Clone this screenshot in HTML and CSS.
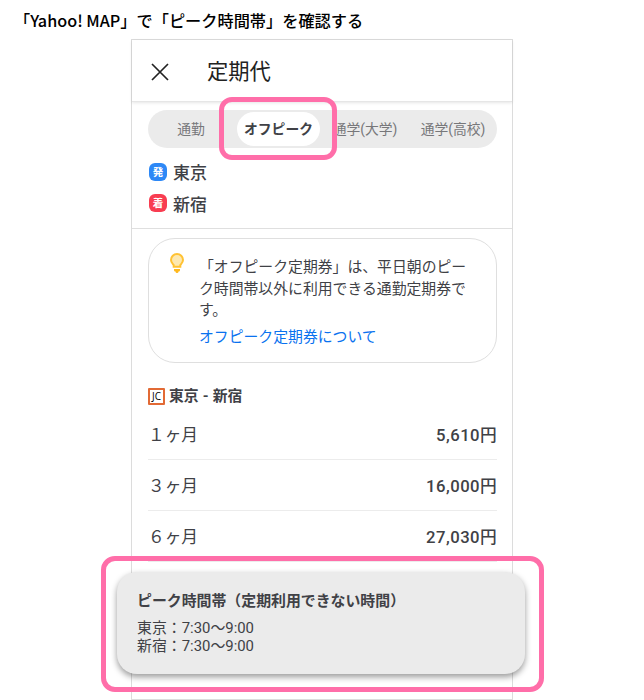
FILE: index.html
```html
<!DOCTYPE html>
<html lang="ja">

<head>
    <meta charset="UTF-8">
    <meta name="viewport" content="width=device-width, initial-scale=1.0">
    <title>定期代</title>
    <link rel="stylesheet" href="styles.css">
</head>

<body>
    <h1 class="page-title">「Yahoo! MAP」で「ピーク時間帯」を確認する</h1>

    <div class="phone">
        <header class="header">
            <svg class="close" viewBox="0 0 18 18">
                <path d="M1 1l16 16M17 1L1 17"></path>
            </svg>
            <h2 class="header-title">定期代</h2>
        </header>

        <!-- 定期の種類 -->
        <div class="tabs">
            <span class="tab">通勤</span>
            <span class="tab active">オフピーク</span>
            <span class="tab">通学(大学)</span>
            <span class="tab">通学(高校)</span>
            <div class="tab-highlight"></div>
        </div>

        <!-- 発着駅 -->
        <div class="stations">
            <div class="station"><span class="badge from">発</span>東京</div>
            <div class="station"><span class="badge to">着</span>新宿</div>
        </div>

        <div class="info">
            <svg class="bulb" viewBox="0 0 16 22">
                <path class="glass" d="M8 2a6 6 0 0 0-6 6c0 2.500 1.600 3.700 2.700 5v1.800h6.600V13c1.100-1.300 2.700-2.500 2.700-5a6 6 0 0 0-6-6z"></path>
                <path class="base" d="M5 17h6v1.200a1.300 1.300 0 0 1-1.300 1.300H9.500a1.500 1.500 0 0 1-3 0h-.2A1.300 1.300 0 0 1 5 18.200z"></path>
            </svg>
            <div class="info-text">
                <p>「オフピーク定期券」は、平日朝のピーク時間帯以外に利用できる通勤定期券です。</p>
                <a class="info-link">オフピーク定期券について</a>
            </div>
        </div>

        <!-- 料金 -->
        <div class="route"><span class="line-mark">JC</span>東京 - 新宿</div>
        <ul class="fares">
            <li><span>１ヶ月</span><b>5,610円</b></li>
            <li><span>３ヶ月</span><b>16,000円</b></li>
            <li><span>６ヶ月</span><b>27,030円</b></li>
        </ul>

        <!-- ピーク時間帯 -->
        <div class="peak-frame">
            <div class="peak">
                <h3>ピーク時間帯（定期利用できない時間）</h3>
                <p>東京：7:30〜9:00</p>
                <p>新宿：7:30〜9:00</p>
            </div>
        </div>
    </div>
</body>

</html>
```
FILE: styles.css
```css
* {
    box-sizing: border-box;
    margin: 0;
    padding: 0;
}

body {
    height: 700px;
    overflow: hidden;
    background: #fff;
    color: #404146;
    font-family: Roboto, "Noto Sans CJK JP", sans-serif;
}

.page-title {
    height: 39px;
    padding: 8px 0 0 14px;
    font-family: "Noto Sans CJK JP", sans-serif;
    font-size: 16.2px;
    font-weight: 500;
    line-height: 24px;
    color: #000;
    white-space: nowrap;
}

.phone {
    position: relative;
    width: 382px;
    height: 661px;
    margin-left: 131px;
    border: 1px solid #dcdcdc;
}

/* ヘッダー */
.header {
    display: flex;
    align-items: center;
    height: 62px;
    padding-left: 19px;
    border-bottom: 1px solid #e6e6e6;
    box-shadow: 0 1px 3px rgba(0, 0, 0, 0.1);
}

.close {
    width: 18px;
    height: 18px;
    margin-top: 2px;
    fill: none;
    stroke: #222;
    stroke-width: 1.7;
}

.header-title {
    margin: 2px 0 0 38px;
    font-size: 21.3px;
    font-weight: 400;
    line-height: 30px;
    color: #222;
}

/* タブ */
.tabs {
    position: relative;
    display: grid;
    grid-template-columns: 86px 87px 88px 88px;
    align-items: center;
    width: 349px;
    height: 38px;
    margin: 8px 0 0 16px;
    border-radius: 19px;
    background: #ebebeb;
}

.tab {
    font-size: 13.8px;
    line-height: 34px;
    text-align: center;
    color: #77777a;
    white-space: nowrap;
}

.tab.active {
    width: 83px;
    height: 34px;
    margin-left: 3px;
    border-radius: 17px;
    background: #fff;
    font-weight: 700;
    color: #404146;
}

.tab-highlight {
    position: absolute;
    top: -13px;
    left: 71px;
    width: 118px;
    height: 63px;
    border: 5px solid #ff6ea9;
    border-radius: 13px;
}

/* 発着駅 */
.stations {
    height: 81px;
    padding: 8px 0 0 17px;
    border-bottom: 1px solid #dfdfdf;
}

.station {
    display: flex;
    align-items: center;
    gap: 6px;
    height: 31.5px;
    font-size: 17px;
    font-weight: 500;
}

.badge {
    width: 18px;
    height: 18px;
    border-radius: 6px;
    font-size: 10.5px;
    font-weight: 700;
    line-height: 19px;
    text-align: center;
    color: #fff;
}

.from {
    background: #2d88f6;
}

.to {
    background: #f83d51;
}

/* お知らせ */
.info {
    display: flex;
    width: 349px;
    height: 125px;
    margin: 9px 0 0 16px;
    padding: 13px 0 0 20px;
    border: 1px solid #dfdfdf;
    border-radius: 27px;
}

.bulb {
    width: 16px;
    height: 22px;
}

.glass {
    fill: #fde8b0;
    stroke: #ffc233;
    stroke-width: 2;
}

.base {
    fill: #ffb81c;
}

.info-text {
    width: 270px;
    margin: 5px 0 0 14px;
    font-size: 14.85px;
    line-height: 21.7px;
}

.info-link {
    display: block;
    margin-top: 5px;
    color: #0a72ef;
}

/* 路線と料金 */
.route {
    display: flex;
    align-items: center;
    gap: 4px;
    height: 22px;
    margin: 22px 0 0 16px;
    font-size: 14.8px;
    font-weight: 700;
    line-height: 20px;
    word-spacing: 0.5px;
}

.line-mark {
    width: 17px;
    height: 17px;
    border: 2px solid #e26a35;
    border-radius: 1px;
    font-family: "Open Sans", sans-serif;
    font-size: 10px;
    font-weight: 400;
    line-height: 13px;
    text-align: center;
    color: #000;
}

.fares {
    margin: 2px 15px 0 16px;
    list-style: none;
}

.fares li {
    display: flex;
    justify-content: space-between;
    align-items: center;
    height: 51px;
    border-bottom: 1px solid #ececec;
    font-size: 16.7px;
}

.fares b {
    margin-right: -0.3px;
    font-weight: 500;
    letter-spacing: 0.5px;
}

/* ピーク時間帯カード */
.peak-frame {
    position: absolute;
    top: 516px;
    left: -31px;
    width: 443px;
    height: 136px;
    padding: 11px;
    border: 5px solid #ff6ea9;
    border-radius: 14px;
}

.peak {
    width: 408px;
    height: 102px;
    padding: 18px 20px;
    border-radius: 20px;
    background: #ebebeb;
    box-shadow: 0 3px 6px rgba(0, 0, 0, 0.4);
}

.peak h3 {
    margin-bottom: 8px;
    font-size: 14.9px;
    font-weight: 700;
    line-height: 22px;
}

.peak p {
    font-size: 14.9px;
    line-height: 17.5px;
}
```
